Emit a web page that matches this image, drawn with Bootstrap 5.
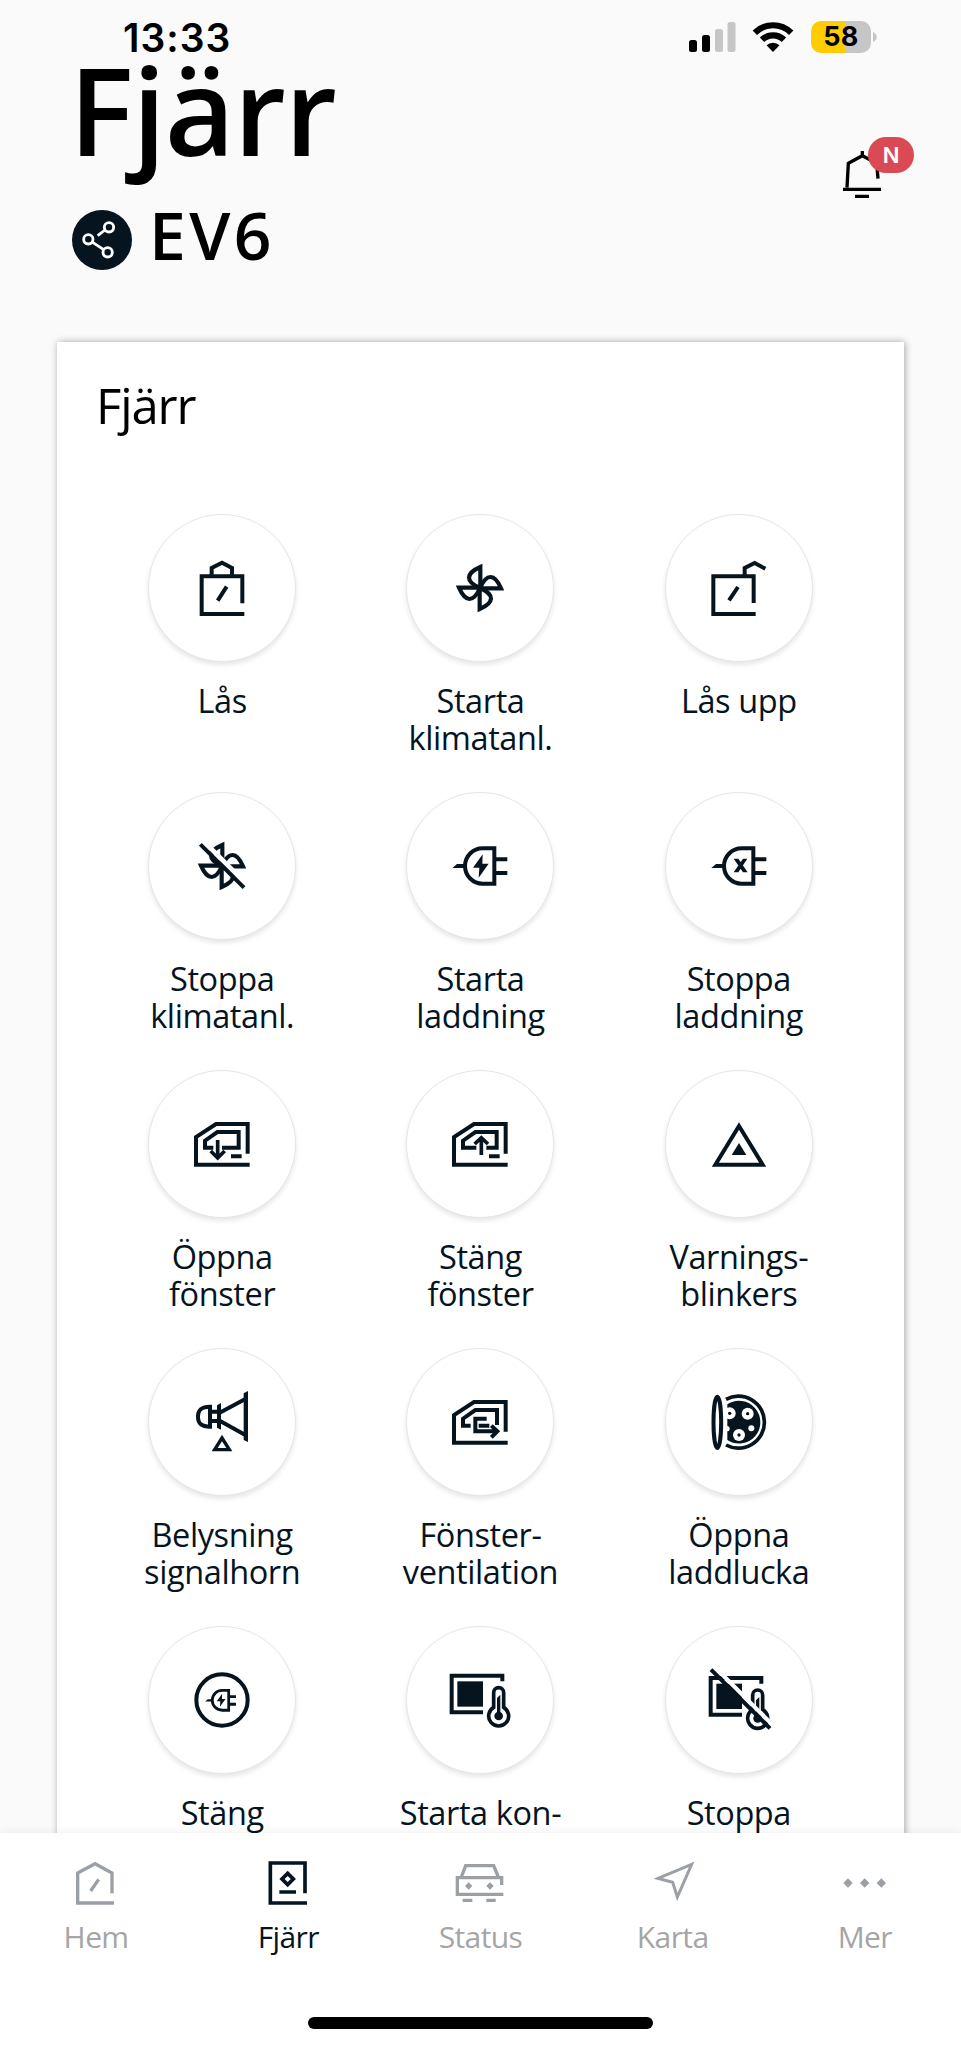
<!DOCTYPE html>
<html lang="sv">
<head>
<meta charset="utf-8">
<meta name="viewport" content="width=device-width, initial-scale=1">
<title>Fjärr</title>
<link href="https://cdn.jsdelivr.net/npm/bootstrap@5.3.0/dist/css/bootstrap.min.css" rel="stylesheet">
<style>
:root{--ink:#05141f}
html,body{height:2048px;overflow:hidden}
body{font-family:"Open Sans","Noto Sans",sans-serif;background:#fafafa;color:#000;width:961px}
.screen-area{height:1833px;overflow:hidden}
.status{height:59px;padding:17px 84px 0 123px}
.clock{font:600 39px/42px Inter,sans-serif;letter-spacing:1px}
.signals{padding-top:4px}
.battery{width:60px;height:32px;border-radius:10px;background:linear-gradient(90deg,#ffcc00 57%,#c6c6c6 57%);font:700 27px/32px Inter,sans-serif;letter-spacing:.4px}
.hero{padding-left:72px}
.hero h1{font-size:121px;font-weight:600;line-height:100px;margin:0 0 0 -3px;letter-spacing:-1.2px}
.model-row{height:60px;margin-top:51px}
.share{width:60px;height:60px;background:var(--ink)}
.model{font-size:66px;font-weight:600;line-height:60px;margin-bottom:13px;letter-spacing:3.4px}
.bell{right:45px;top:137px}
.bell-badge{width:46px;height:36px;left:25px;top:0;background:#da4a54;color:#fff;font:600 22px/37px Inter,sans-serif}
.panel{width:847px;height:1600px;margin:72px 0 0 57px;padding:33px 36px 0;background:#fff;box-shadow:1px 0 7px rgba(0,0,0,.34)}
.panel h2{font-size:49px;font-weight:400;line-height:60px;margin:0 0 79px 3px;letter-spacing:-1.1px}
.actions{display:grid;grid-template-columns:repeat(3,1fr);grid-auto-rows:278px}
.disc{width:148px;height:148px;border:1px solid #e6e6e6;box-shadow:0 3px 5px rgba(0,0,0,.1);background:#fff}
.disc svg{width:74px;height:74px;overflow:visible}
.tag{margin-top:20px;font-size:32.5px;line-height:37px;color:var(--ink);white-space:nowrap;letter-spacing:-.4px}
.ico{fill:none;stroke:var(--ink);stroke-width:12;stroke-miterlimit:10}
.ico .f{fill:var(--ink);stroke:none}
.ico .w{fill:#fff;stroke:none}
.ico .gap{stroke:#fff}
.tabs{height:215px;background:#fff;box-shadow:0 -1px 8px rgba(0,0,0,.06);position:relative}
.tabs a{width:20%;color:#a5a5a5;text-decoration:none;font-size:30px;line-height:40px;padding-top:24px;letter-spacing:-.6px}
.tabs span{margin-top:8px}
.tabs svg{width:52px;height:52px;overflow:visible;fill:none;stroke:#9aa0a5;stroke-width:10;stroke-miterlimit:10}
.tabs svg .f{fill:#9aa0a5;stroke:none}
.tabs a.on{color:var(--ink)}
.tabs a.on svg{stroke:var(--ink);stroke-width:11}
.homebar{width:345px;height:12px;background:#000;margin-top:60px}
</style>
</head>
<body>
<svg width="0" height="0" class="position-absolute">
<defs>
<g id="blade"><path d="M1 0V-63C-43 -44 -45 -20 0 0" stroke-width="12.500"/></g>
<g id="fan"><use href="#blade"/><use href="#blade" transform="rotate(90)"/><use href="#blade" transform="rotate(180)"/><use href="#blade" transform="rotate(270)"/></g>
<g id="plug"><path d="M43 -53H8A53 53 0 0 0 8 53H43ZM49 -20H82M49 21H82"/><path class="f" style="fill:#05141f;stroke:none" d="M-83 6L-69 -6H-48V6Z"/></g>
<g id="bolt"><path style="fill:#05141f;stroke:none" d="M8 -35L-21 5H-2L-4 35L26 -7H7Z"/></g>
<g id="door"><path d="M77 29V-60H-18L-78 -21V62H83"/></g>
<g id="seat"><path d="M67 -56V-73H-85V37H9" stroke-width="12"/><path style="fill:#05141f;stroke:none" d="M-68 -56H9V20H-68Z"/><path d="M41 22V-22A15 15 0 0 1 71 -22V22A30 30 0 1 1 41 22Z" stroke-width="11"/><circle cx="56" cy="48" r="13" style="fill:#05141f;stroke:none"/><path style="fill:#05141f;stroke:none" d="M51 -6L61 -16V48H51Z"/></g>
</defs>
</svg>

<div class="screen-area position-relative">
  <div class="status d-flex justify-content-between align-items-start">
    <div class="clock">13:33</div>
    <div class="signals d-flex align-items-start">
      <svg width="47" height="32" viewBox="0 0 47 32"><g fill="#000"><rect x="0" y="19" width="8" height="12" rx="2.5"/><rect x="13" y="14" width="8" height="17" rx="2.5"/></g><g fill="#c6c6c6"><rect x="26" y="8" width="8" height="23" rx="2.5"/><rect x="38.500" y="1" width="8" height="30" rx="2.5"/></g></svg>
      <svg class="ms-3" width="42" height="32" viewBox="0 0 42 32"><g fill="none" stroke="#000" stroke-width="6.200"><path d="M2.800 11.700A26 26 0 0 1 39.200 11.700"/><path d="M10 18.800A16 16 0 0 1 32 18.800"/></g><path d="M21 31L14.500 24.300A9.500 9.500 0 0 1 27.500 24.300Z"/></svg>
      <div class="d-flex align-items-center" style="margin-left:17px"><div class="battery text-center">58</div><svg class="ms-1" width="4" height="10" viewBox="0 0 4 10" style="margin-left:2px!important"><path d="M0 0C5 2 5 8 0 10Z" fill="#c6c6c6"/></svg></div>
    </div>
  </div>
  <div class="hero">
    <h1>Fjärr</h1>
    <div class="model-row d-flex align-items-center">
      <div class="share rounded-circle"><svg class="d-block" width="60" height="60" viewBox="0 0 180 180" fill="none" stroke="#fff" stroke-width="8.500"><circle cx="111" cy="52" r="14"/><circle cx="49" cy="88" r="14"/><circle cx="107" cy="127" r="14"/><path d="M77 77L99 60M62 97L95 119"/></svg></div>
      <div class="model" style="margin-left:17px">EV6</div>
    </div>
  </div>
  <div class="bell position-absolute" style="width:73px">
    <svg width="42" height="64" viewBox="0 0 126 192" fill="none" stroke="#000" stroke-width="10"><path d="M0 157H114M36 178H78" /><path d="M12 152L16 79L58 56L101 79L105 125M58 60V42"/></svg>
    <div class="bell-badge position-absolute rounded-pill text-center">N</div>
  </div>

  <section class="panel">
    <h2>Fjärr</h2>
    <div class="actions">
      <div class="d-flex flex-column align-items-center"><div class="disc rounded-circle d-flex align-items-center justify-content-center"><svg class="ico" viewBox="-111 -111 222 222"><path d="M61 46V-35H-61V78H67M-31 -38V-60L0 -76L30 -60V-38M14 -4L-13 38"/></svg></div><div class="tag text-center">Lås</div></div>
      <div class="d-flex flex-column align-items-center"><div class="disc rounded-circle d-flex align-items-center justify-content-center"><svg class="ico" viewBox="-111 -111 222 222"><use href="#fan"/></svg></div><div class="tag text-center">Starta<br>klimatanl.</div></div>
      <div class="d-flex flex-column align-items-center"><div class="disc rounded-circle d-flex align-items-center justify-content-center"><svg class="ico" viewBox="-111 -111 222 222"><path d="M44 45V-35H-77V78H50M17 -38V-60L47 -75L79 -58M-3 -3L-30 37"/></svg></div><div class="tag text-center">Lås upp</div></div>

      <div class="d-flex flex-column align-items-center"><div class="disc rounded-circle d-flex align-items-center justify-content-center"><svg class="ico" viewBox="-111 -111 222 222"><use href="#fan"/><path class="gap" stroke-width="14" d="M-56 -75L76 57"/><path d="M-65 -65L66 65"/></svg></div><div class="tag text-center">Stoppa<br>klimatanl.</div></div>
      <div class="d-flex flex-column align-items-center"><div class="disc rounded-circle d-flex align-items-center justify-content-center"><svg class="ico" viewBox="-111 -111 222 222"><use href="#plug"/><use href="#bolt"/></svg></div><div class="tag text-center">Starta<br>laddning</div></div>
      <div class="d-flex flex-column align-items-center"><div class="disc rounded-circle d-flex align-items-center justify-content-center"><svg class="ico" viewBox="-111 -111 222 222"><use href="#plug"/><path class="f" d="M-16 -22H-2L26 19H12ZM12 -22H25L-2 19H-16Z"/></svg></div><div class="tag text-center">Stoppa<br>laddning</div></div>

      <div class="d-flex flex-column align-items-center"><div class="disc rounded-circle d-flex align-items-center justify-content-center"><svg class="ico" viewBox="-111 -111 222 222"><use href="#door"/><path d="M-26 11H-51V-10L-14 -36H50V11H0M27 37H59" stroke-width="12"/><path d="M-13 -12V38M-34 21L-13 42L8 21" stroke-width="11"/></svg></div><div class="tag text-center">Öppna<br>fönster</div></div>
      <div class="d-flex flex-column align-items-center"><div class="disc rounded-circle d-flex align-items-center justify-content-center"><svg class="ico" viewBox="-111 -111 222 222"><use href="#door"/><path d="M-11 11H-51V-10L-14 -36H50V11H19M27 37H59" stroke-width="12"/><path d="M4 33V-16M-16 0L4 -19L24 0" stroke-width="11"/></svg></div><div class="tag text-center">Stäng<br>fönster</div></div>
      <div class="d-flex flex-column align-items-center"><div class="disc rounded-circle d-flex align-items-center justify-content-center"><svg class="ico" viewBox="-111 -111 222 222"><path d="M0 -54L-71 62H71Z"/><path class="f" d="M0 -3L22 33H-22Z"/></svg></div><div class="tag text-center">Varnings-<br>blinkers</div></div>

      <div class="d-flex flex-column align-items-center"><div class="disc rounded-circle d-flex align-items-center justify-content-center"><svg class="ico" viewBox="-111 -111 222 222"><path class="f" d="M65 -86L78 -93V60L65 54Z"/><path d="M-7 -28L70 -69M-7 -4L70 39M-36 -46C-60 -46 -72 -38 -72 -16S-60 14 -36 14Z"/><path d="M-36 -31H-9M-36 -3H-9"/><path class="f" d="M-15 -50L-3 -57V23L-15 17Z"/><path d="M0 48L-22 83H22Z" stroke-width="10"/></svg></div><div class="tag text-center">Belysning<br>signalhorn</div></div>
      <div class="d-flex flex-column align-items-center"><div class="disc rounded-circle d-flex align-items-center justify-content-center"><svg class="ico" viewBox="-111 -111 222 222"><use href="#door"/><path d="M-28 11H-51V-10L-14 -36H51V9M20 -10H-14V28H50M-4 11H28M34 11L52 28L34 46" stroke-width="12"/></svg></div><div class="tag text-center">Fönster-<br>ventilation</div></div>
      <div class="d-flex flex-column align-items-center"><div class="disc rounded-circle d-flex align-items-center justify-content-center"><svg class="ico" viewBox="-111 -111 222 222"><ellipse cx="-65" cy="1" rx="11.500" ry="77"/><path d="M-39 -68A78 78 0 1 1 -39 69" stroke-width="11"/><path class="f" d="M-35 -53A64 64 0 1 1 -35 54Z"/><g class="w"><circle cx="-28" cy="-26" r="18"/><circle cx="26" cy="-25" r="18"/><circle cx="0" cy="39" r="18"/><circle cx="37" cy="19" r="9"/><circle cx="-36" cy="20" r="8"/></g><g class="f"><circle cx="-28" cy="-26" r="5"/><circle cx="26" cy="-25" r="5"/><circle cx="0" cy="39" r="5"/></g></svg></div><div class="tag text-center">Öppna<br>laddlucka</div></div>

      <div class="d-flex flex-column align-items-center"><div class="disc rounded-circle d-flex align-items-center justify-content-center"><svg class="ico" viewBox="-111 -111 222 222"><circle r="77"/><g transform="translate(-4 1) scale(.56)" stroke-width="15"><use href="#plug"/><use href="#bolt"/></g></svg></div><div class="tag text-center">Stäng</div></div>
      <div class="d-flex flex-column align-items-center"><div class="disc rounded-circle d-flex align-items-center justify-content-center"><svg class="ico" viewBox="-111 -111 222 222"><use href="#seat"/></svg></div><div class="tag text-center">Starta kon-</div></div>
      <div class="d-flex flex-column align-items-center"><div class="disc rounded-circle d-flex align-items-center justify-content-center"><svg class="ico" viewBox="-111 -111 222 222"><use href="#seat" y="7"/><path class="gap" d="M-73 -99L101 75"/><path d="M-84 -91L93 85"/></svg></div><div class="tag text-center">Stoppa</div></div>
    </div>
  </section>
</div>

<nav class="tabs">
  <div class="d-flex">
    <a href="#" class="d-flex flex-column align-items-center"><svg viewBox="-78 -78 156 156"><path d="M48 31V-30L-3 -58L-55 -30V60H54M8 -11L-16 24"/></svg><span>Hem</span></a>
    <a href="#" class="on d-flex flex-column align-items-center"><svg viewBox="-78 -78 156 156"><path d="M51 31V-60H-53V60H57M-26 27H24M-1 -29L16 -12L-1 5L-18 -12Z"/></svg><span>Fjärr</span></a>
    <a href="#" class="d-flex flex-column align-items-center"><svg viewBox="-78 -78 156 156"><path d="M65 6V-16H-68V34H70M-56 -18L-43 -52H41L55 -18M-52 52H-23M19 52H47"/><path class="f" d="M-34 -2L-23 9L-34 20L-45 9ZM30 -2L41 9L30 20L19 9Z"/></svg><span>Status</span></a>
    <a href="#" class="d-flex flex-column align-items-center"><svg viewBox="-78 -78 156 156" style="stroke-width:9"><path d="M56 -56L-45 -14L-1 -2L13 42Z"/></svg><span>Karta</span></a>
    <a href="#" class="d-flex flex-column align-items-center"><svg viewBox="-78 -78 156 156"><path class="f" d="M-51 -14L-37 0L-51 14L-65 0ZM-1 -14L13 0L-1 14L-15 0ZM49 -14L63 0L49 14L35 0Z"/></svg><span>Mer</span></a>
  </div>
  <div class="homebar rounded-pill mx-auto"></div>
</nav>
<script src="https://cdn.jsdelivr.net/npm/bootstrap@5.3.0/dist/js/bootstrap.bundle.min.js"></script>
</body>
</html>
